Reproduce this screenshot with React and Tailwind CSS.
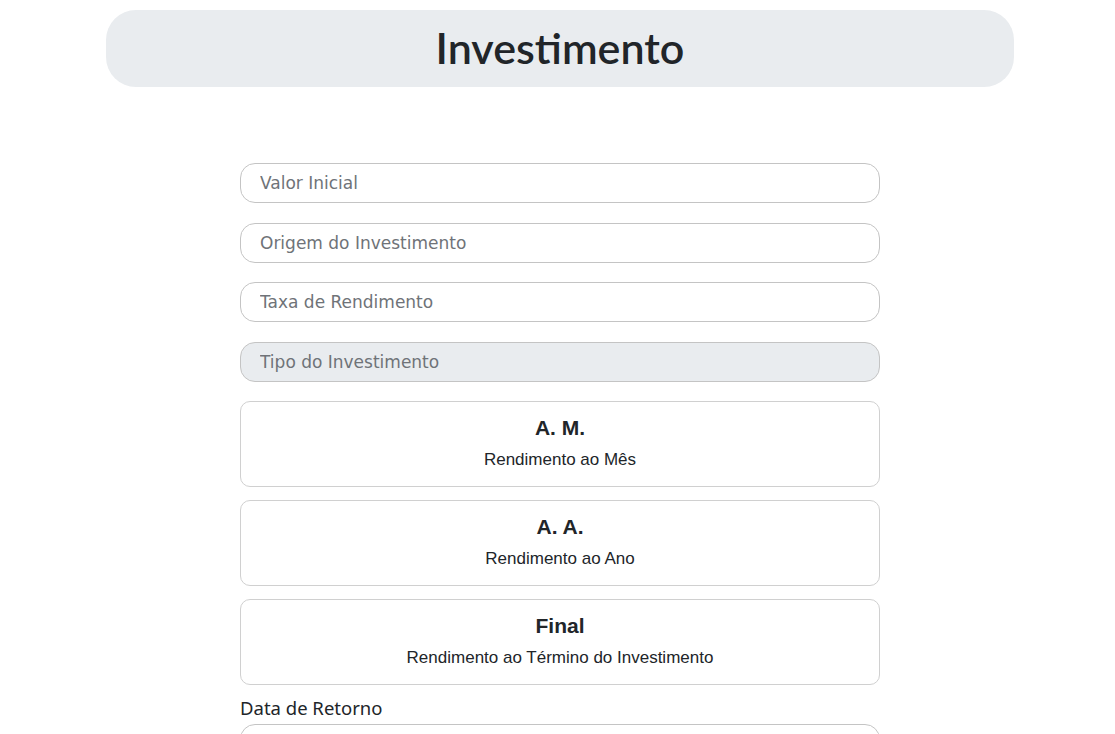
import React from "react";

const inputCls =
  "block w-full h-[40px] rounded-[15px] border border-[#c4c4c4] px-[19px] text-[17px] text-[#212529] placeholder:text-[#6f7378] outline-none font-['DejaVu_Sans',Verdana,sans-serif]";

function Card({ title, sub }) {
  return (
    <div className="w-full h-[86px] rounded-[10px] border border-[#d0d0d0] bg-white flex flex-col items-center pt-[12px] text-[#212529] font-['Liberation_Sans',Arial,sans-serif]">
      <div className="text-[21px] font-bold leading-[28px]">{title}</div>
      <div className="text-[17px] leading-[20px] mt-[8px]">{sub}</div>
    </div>
  );
}

export default function App() {
  return (
    <div className="min-h-[734px] bg-white pt-[10px] pl-[5px] font-['Noto_Sans','Open_Sans',sans-serif]">
      <div className="mx-auto w-[908px] h-[77px] rounded-[30px] bg-[#e9ecef] flex items-center justify-center pb-[2px]">
        <h1 className="text-[43px] font-semibold text-[#212529] leading-none font-['Lato',sans-serif]">Investimento</h1>
      </div>
      <div className="mx-auto w-[640px] mt-[76px] flex flex-col">
        <div className="flex flex-col gap-[19.5px]">
          <input className={inputCls + " bg-white"} placeholder="Valor Inicial" />
          <input className={inputCls + " bg-white"} placeholder="Origem do Investimento" />
          <input className={inputCls + " bg-white"} placeholder="Taxa de Rendimento" />
          <input className={inputCls + " bg-[#e9ecef]"} placeholder="Tipo do Investimento" disabled />
        </div>
        <div className="flex flex-col gap-[13px] mt-[19px]">
          <Card title="A. M." sub="Rendimento ao Mês" />
          <Card title="A. A." sub="Rendimento ao Ano" />
          <Card title="Final" sub="Rendimento ao Término do Investimento" />
        </div>
        <label className="mt-[11px] text-[18.5px] text-[#212529] leading-[24px]">Data de Retorno</label>
        <input className={inputCls + " bg-white mt-[4px]"} type="text" />
      </div>
    </div>
  );
}
